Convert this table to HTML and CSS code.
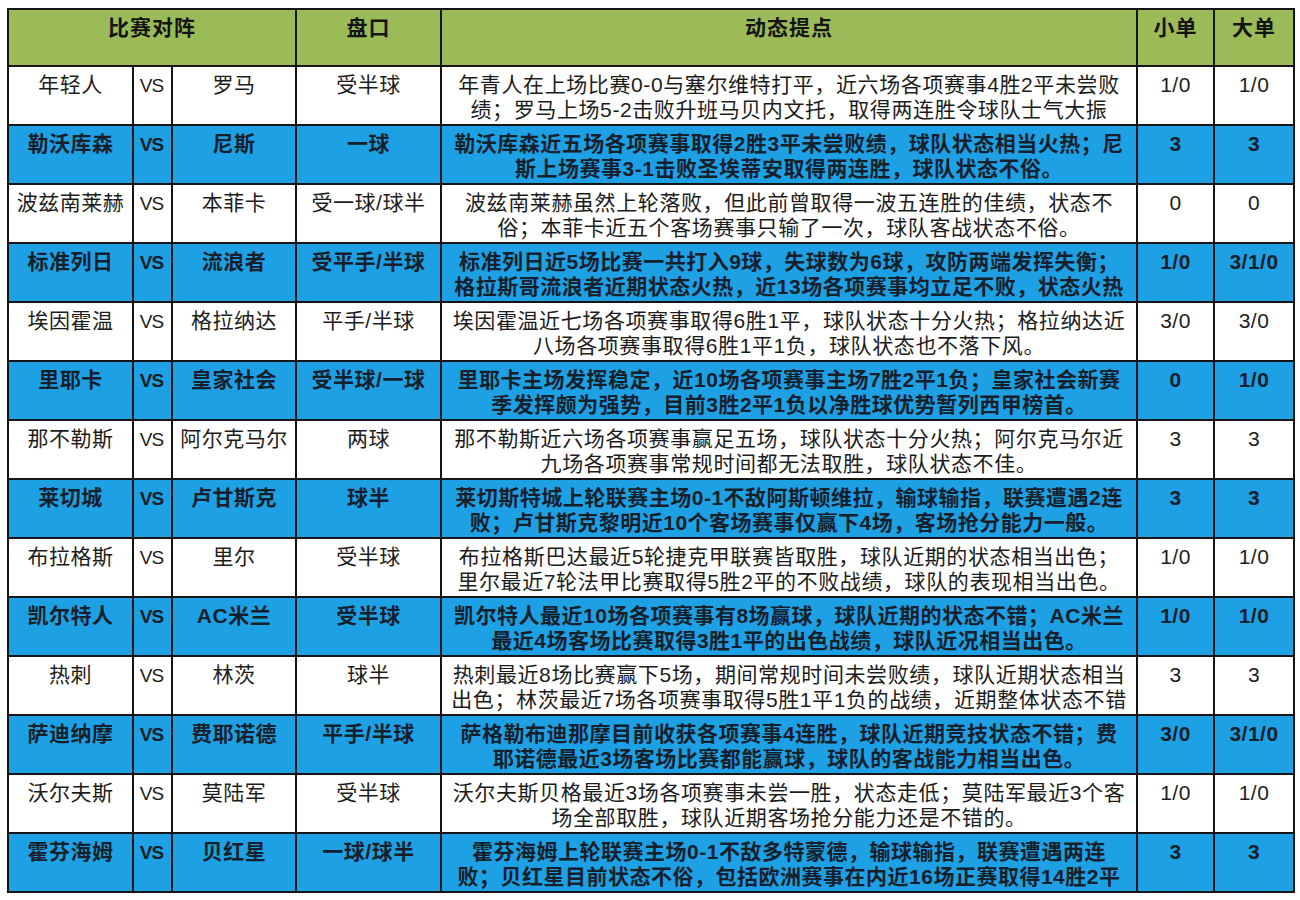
FILE: index.html
```html
<!DOCTYPE html>
<html lang="zh">
<head>
<meta charset="utf-8">
<title>比赛对阵</title>
<link rel="stylesheet" href="styles.css">
</head>
<body>
<div class="sheet">
  <div class="cell head match">比赛对阵</div>
  <div class="cell head">盘口</div>
  <div class="cell head">动态提点</div>
  <div class="cell head">小单</div>
  <div class="cell head">大单</div>

  <div class="cell">年轻人</div><div class="cell vs">VS</div><div class="cell">罗马</div><div class="cell">受半球</div>
  <div class="cell desc">年青人在上场比赛0-0与塞尔维特打平，近六场各项赛事4胜2平未尝败<br>绩；罗马上场5-2击败升班马贝内文托，取得两连胜令球队士气大振</div>
  <div class="cell">1/0</div><div class="cell">1/0</div>

  <div class="cell hl">勒沃库森</div><div class="cell hl vs">VS</div><div class="cell hl">尼斯</div><div class="cell hl">一球</div>
  <div class="cell hl desc">勒沃库森近五场各项赛事取得2胜3平未尝败绩，球队状态相当火热；尼<br>斯上场赛事3-1击败圣埃蒂安取得两连胜，球队状态不俗。</div>
  <div class="cell hl">3</div><div class="cell hl">3</div>

  <div class="cell">波兹南莱赫</div><div class="cell vs">VS</div><div class="cell">本菲卡</div><div class="cell">受一球/球半</div>
  <div class="cell desc">波兹南莱赫虽然上轮落败，但此前曾取得一波五连胜的佳绩，状态不<br>俗；本菲卡近五个客场赛事只输了一次，球队客战状态不俗。</div>
  <div class="cell">0</div><div class="cell">0</div>

  <div class="cell hl">标准列日</div><div class="cell hl vs">VS</div><div class="cell hl">流浪者</div><div class="cell hl">受平手/半球</div>
  <div class="cell hl desc">标准列日近5场比赛一共打入9球，失球数为6球，攻防两端发挥失衡；<br>格拉斯哥流浪者近期状态火热，近13场各项赛事均立足不败，状态火热</div>
  <div class="cell hl">1/0</div><div class="cell hl">3/1/0</div>

  <div class="cell">埃因霍温</div><div class="cell vs">VS</div><div class="cell">格拉纳达</div><div class="cell">平手/半球</div>
  <div class="cell desc">埃因霍温近七场各项赛事取得6胜1平，球队状态十分火热；格拉纳达近<br>八场各项赛事取得6胜1平1负，球队状态也不落下风。</div>
  <div class="cell">3/0</div><div class="cell">3/0</div>

  <div class="cell hl">里耶卡</div><div class="cell hl vs">VS</div><div class="cell hl">皇家社会</div><div class="cell hl">受半球/一球</div>
  <div class="cell hl desc">里耶卡主场发挥稳定，近10场各项赛事主场7胜2平1负；皇家社会新赛<br>季发挥颇为强势，目前3胜2平1负以净胜球优势暂列西甲榜首。</div>
  <div class="cell hl">0</div><div class="cell hl">1/0</div>

  <div class="cell">那不勒斯</div><div class="cell vs">VS</div><div class="cell">阿尔克马尔</div><div class="cell">两球</div>
  <div class="cell desc">那不勒斯近六场各项赛事赢足五场，球队状态十分火热；阿尔克马尔近<br>九场各项赛事常规时间都无法取胜，球队状态不佳。</div>
  <div class="cell">3</div><div class="cell">3</div>

  <div class="cell hl">莱切城</div><div class="cell hl vs">VS</div><div class="cell hl">卢甘斯克</div><div class="cell hl">球半</div>
  <div class="cell hl desc">莱切斯特城上轮联赛主场0-1不敌阿斯顿维拉，输球输指，联赛遭遇2连<br>败；卢甘斯克黎明近10个客场赛事仅赢下4场，客场抢分能力一般。</div>
  <div class="cell hl">3</div><div class="cell hl">3</div>

  <div class="cell">布拉格斯</div><div class="cell vs">VS</div><div class="cell">里尔</div><div class="cell">受半球</div>
  <div class="cell desc">布拉格斯巴达最近5轮捷克甲联赛皆取胜，球队近期的状态相当出色；<br>里尔最近7轮法甲比赛取得5胜2平的不败战绩，球队的表现相当出色。</div>
  <div class="cell">1/0</div><div class="cell">1/0</div>

  <div class="cell hl">凯尔特人</div><div class="cell hl vs">VS</div><div class="cell hl">AC米兰</div><div class="cell hl">受半球</div>
  <div class="cell hl desc">凯尔特人最近10场各项赛事有8场赢球，球队近期的状态不错；AC米兰<br>最近4场客场比赛取得3胜1平的出色战绩，球队近况相当出色。</div>
  <div class="cell hl">1/0</div><div class="cell hl">1/0</div>

  <div class="cell">热刺</div><div class="cell vs">VS</div><div class="cell">林茨</div><div class="cell">球半</div>
  <div class="cell desc">热刺最近8场比赛赢下5场，期间常规时间未尝败绩，球队近期状态相当<br>出色；林茨最近7场各项赛事取得5胜1平1负的战绩，近期整体状态不错</div>
  <div class="cell">3</div><div class="cell">3</div>

  <div class="cell hl">萨迪纳摩</div><div class="cell hl vs">VS</div><div class="cell hl">费耶诺德</div><div class="cell hl">平手/半球</div>
  <div class="cell hl desc">萨格勒布迪那摩目前收获各项赛事4连胜，球队近期竞技状态不错；费<br>耶诺德最近3场客场比赛都能赢球，球队的客战能力相当出色。</div>
  <div class="cell hl">3/0</div><div class="cell hl">3/1/0</div>

  <div class="cell">沃尔夫斯</div><div class="cell vs">VS</div><div class="cell">莫陆军</div><div class="cell">受半球</div>
  <div class="cell desc">沃尔夫斯贝格最近3场各项赛事未尝一胜，状态走低；莫陆军最近3个客<br>场全部取胜，球队近期客场抢分能力还是不错的。</div>
  <div class="cell">1/0</div><div class="cell">1/0</div>

  <div class="cell hl">霍芬海姆</div><div class="cell hl vs">VS</div><div class="cell hl">贝红星</div><div class="cell hl">一球/球半</div>
  <div class="cell hl desc">霍芬海姆上轮联赛主场0-1不敌多特蒙德，输球输指，联赛遭遇两连<br>败；贝红星目前状态不俗，包括欧洲赛事在内近16场正赛取得14胜2平</div>
  <div class="cell hl">3</div><div class="cell hl">3</div>
</div>
</body>
</html>
```

FILE: styles.css
```css
html, body {
  margin: 0;
  padding: 0;
  background: #ffffff;
}

body {
  font-family: "Liberation Sans", "Noto Sans CJK SC", sans-serif;
  color: #1c1c1c;
}

.sheet {
  margin: 8px 0 0 7px;
  width: 1284px;
  padding: 2px;
  background: #151515;
  display: grid;
  grid-template-columns: 123px 37px 122px 143px 694px 75px 78px;
  grid-template-rows: 55px;
  grid-auto-rows: 57px;
  gap: 2px;
}

.cell {
  background: #ffffff;
  font-size: 21px;
  line-height: 25px;
  letter-spacing: 0.5px;
  text-align: center;
  white-space: nowrap;
  overflow: hidden;
  padding-top: 5px;
  box-sizing: border-box;
}

.head {
  background: #9bbb59;
  font-weight: 700;
  color: #141414;
  letter-spacing: 1px;
}

.match {
  grid-column: span 3;
}

.vs {
  font-size: 19px;
  letter-spacing: -1px;
  padding-top: 6px;
  padding-right: 2px;
}

.desc {
  letter-spacing: 0.6px;
  overflow: visible;
}

.hl {
  background: #1ea0e4;
  font-weight: 700;
  color: #16202a;
}

.hl.desc {
  letter-spacing: 0.5px;
}
```
